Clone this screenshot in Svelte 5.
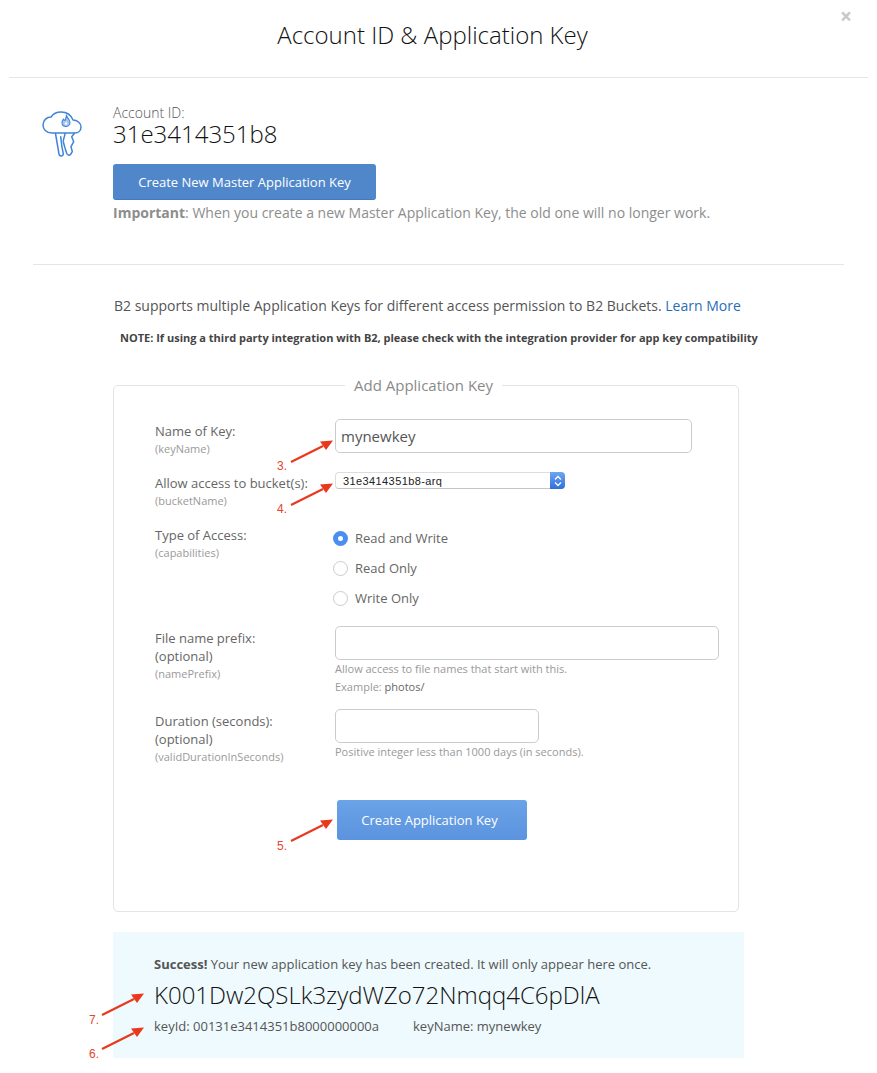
<script lang="ts">
  // steps drawn over the form: tail -> tip, with its number beside the tail
  const arrows = [
    { n: "3.", x: 291, y: 462, lx: 277, ly: 470 },
    { n: "4.", x: 291, y: 505, lx: 277, ly: 513 },
    { n: "5.", x: 291, y: 841, lx: 277, ly: 850 },
    { n: "7.", x: 102, y: 1015, lx: 89, ly: 1024 },
    { n: "6.", x: 102, y: 1049, lx: 89, ly: 1058 }
  ];

  const access = [
    { label: "Read and Write", checked: true },
    { label: "Read Only", checked: false },
    { label: "Write Only", checked: false }
  ];
</script>

<div class="page">
  <header class="head">
    <h1>Account ID &amp; Application Key</h1>
    <span class="close">×</span>
  </header>

  <section class="account">
    <svg class="logo" width="42" height="46" viewBox="0 0 42 46" fill="none" stroke="#3f84d6" stroke-width="1.500" stroke-linejoin="round" stroke-linecap="round">
      <path d="M10 22 C4 22 1 18 1 14 C1 9 5 6 9 6 C11 3 15 1 19 1 C25 1 29 4 31 9 C35 9 39 12 39 16 C39 20 36 22 33 22 Z" />
      <path d="M24.500 4 C24.500 6.500 28 8.500 28 11.500 C28 14 26 15.500 24 15.500 C21.500 15.500 20 14 20 11.500 C20 10 21 9 21.500 8 C22 9 22.500 9.500 23 9.500 C23.500 8 24.500 6 24.500 4 Z" fill="#3f84d6" fill-opacity="0.45" stroke-width="1.100" />
      <path d="M24 10.500 C24.500 11.500 25.500 12 25 13 C24.500 14 23 14 22.800 13 C22.700 12 23.800 11.500 24 10.500 Z" fill="#fff" stroke="none" />
      <path d="M13.500 22.500 L17 43 C17.500 45.500 20.500 46 21.300 43.300 C21 40 20 37 19.700 34 L18.700 25.700" />
      <path d="M23 22.500 C23 25 21 28 21.300 30.700 L23 37 L24.700 42.300 C25.500 44.500 27.500 44.500 28.500 43.500 L30.300 40.700 L29 35.700 L31.700 30.700 L29.700 25.700 L32.300 22.500" />
    </svg>
    <div class="account-body">
      <div class="account-label">Account ID:</div>
      <div class="account-id">31e3414351b8</div>
      <button class="btn master">Create New Master Application Key</button>
      <p class="important"><strong>Important</strong>: When you create a new Master Application Key, the old one will no longer work.</p>
    </div>
  </section>

  <hr class="rule" />

  <p class="intro">B2 supports multiple Application Keys for different access permission to B2 Buckets. <span class="link">Learn More</span></p>
  <p class="note">NOTE: If using a third party integration with B2, please check with the integration provider for app key compatibility</p>

  <fieldset class="form">
    <legend>Add Application Key</legend>

    <div class="row row-name">
      <div class="label">Name of Key:<small>(keyName)</small></div>
      <div class="input big">mynewkey</div>
    </div>

    <div class="row row-bucket">
      <div class="label">Allow access to bucket(s):<small>(bucketName)</small></div>
      <div class="select">
        <span>31e3414351b8-arq</span>
        <span class="stepper">
          <svg width="8" height="12" viewBox="0 0 8 12" fill="none" stroke="#fff" stroke-width="1.300"><path d="M1 4.500 L4 1.500 L7 4.500 M1 7.500 L4 10.500 L7 7.500" /></svg>
        </span>
      </div>
    </div>

    <div class="row row-type">
      <div class="label">Type of Access:<small>(capabilities)</small></div>
      <div class="radios">
        {#each access as opt}
          <div class="radio-row">
            <span class="radio" class:on={opt.checked}></span>
            {opt.label}
          </div>
        {/each}
      </div>
    </div>

    <div class="row row-prefix">
      <div class="label">File name prefix:<br />(optional)<small>(namePrefix)</small></div>
      <div>
        <div class="input wide"></div>
        <div class="hint">Allow access to file names that start with this.</div>
        <div class="hint example">Example: <span>photos/</span></div>
      </div>
    </div>

    <div class="row row-duration">
      <div class="label">Duration (seconds):<br />(optional)<small>(validDurationInSeconds)</small></div>
      <div>
        <div class="input short"></div>
        <div class="hint">Positive integer less than 1000 days (in seconds).</div>
      </div>
    </div>

    <button class="btn create">Create Application Key</button>
  </fieldset>

  <section class="success">
    <p class="success-msg"><strong>Success!</strong> Your new application key has been created. It will only appear here once.</p>
    <div class="app-key">K001Dw2QSLk3zydWZo72Nmqq4C6pDlA</div>
    <div class="key-meta"><span>keyId: 00131e3414351b8000000000a</span><span>keyName: mynewkey</span></div>
  </section>

  <svg class="marks" width="877" height="1073" viewBox="0 0 877 1073">
    {#each arrows as a}
      <g transform="translate({a.x} {a.y})">
        <path d="M0 0 L32 -16" stroke="#e8391f" stroke-width="2.200" fill="none" />
        <path d="M42 -21.500 L29 -20.500 L35 -12 Z" fill="#e8391f" />
      </g>
      <text x={a.lx} y={a.ly}>{a.n}</text>
    {/each}
  </svg>
</div>

<style>
  :global(body) {
    background: #fff;
  }
  .page {
    position: relative;
    width: 877px;
    height: 1073px;
    overflow: hidden;
    font-family: "Open Sans", sans-serif;
    color: #555;
  }
  .head {
    position: relative;
    margin: 0 9px;
    height: 77px;
    padding-right: 12px;
    border-bottom: 1px solid #e5e5e5;
    text-align: center;
  }
  h1 {
    margin: 0;
    padding-top: 18px;
    font-size: 24px;
    line-height: 33px;
    font-weight: 300;
    color: #111;
  }
  .close {
    position: absolute;
    right: 16px;
    top: 3px;
    font-size: 21px;
    line-height: 26px;
    font-weight: 700;
    color: #c8c8c8;
  }
  .account {
    display: flex;
    padding: 25px 0 0 42px;
  }
  .logo {
    flex: none;
    margin: 8px 29px 0 0;
  }
  .account-body {
    display: flex;
    flex-direction: column;
    align-items: flex-start;
  }
  .account-label {
    font-size: 14px;
    line-height: 19px;
    font-weight: 300;
    color: #555;
  }
  .account-id {
    font-size: 24px;
    line-height: 23px;
    font-weight: 300;
    color: #111;
  }
  .btn {
    display: block;
    border: none;
    border-radius: 3px;
    font-family: inherit;
    color: #fff;
    padding: 0;
  }
  .master {
    width: 263px;
    height: 36px;
    margin-top: 19px;
    font-size: 13px;
    background: #5087cb;
    border-bottom: 1px solid #4379bd;
  }
  .important {
    margin: 3px 0 0;
    font-size: 14px;
    line-height: 19px;
    color: #8d8d8d;
  }
  .important strong {
    font-weight: 700;
  }
  .rule {
    margin: 42px 33px 0;
    border: none;
    border-top: 1px solid #e5e5e5;
  }
  .intro {
    margin: 31px 0 0 114px;
    font-size: 14px;
    line-height: 19px;
    color: #555;
  }
  .link {
    color: #2a6db5;
  }
  .note {
    margin: 15px 0 0 120px;
    font-size: 11px;
    line-height: 15px;
    font-weight: 700;
    color: #444;
    white-space: nowrap;
  }
  .form {
    box-sizing: border-box;
    width: 626px;
    height: 537px;
    margin: 30px 0 0 113px;
    padding: 0 0 0 41px;
    border: 1px solid #e4e4e4;
    border-radius: 5px;
    min-width: 0;
  }
  legend {
    margin: 0 0 0 190px;
    padding: 0 9px;
    font-size: 15px;
    line-height: 20px;
    color: #8a8a8a;
  }
  .row {
    display: grid;
    grid-template-columns: 180px 1fr;
  }
  .row-name {
    margin-top: 24px;
  }
  .row-bucket {
    margin-top: 14px;
  }
  .row-type {
    margin-top: 16px;
  }
  .row-prefix {
    margin-top: 13px;
  }
  .row-duration {
    margin-top: 13px;
  }
  .label {
    padding-top: 3px;
    font-size: 13px;
    line-height: 18px;
    color: #666;
  }
  .label small {
    display: block;
    font-size: 11px;
    line-height: 18px;
    color: #9a9a9a;
  }
  .row-bucket .label {
    padding-top: 2px;
  }
  .row-type .label {
    padding-top: 0;
  }
  .input {
    box-sizing: border-box;
    height: 34px;
    border: 1px solid #ccc;
    border-radius: 5px;
    background: #fff;
  }
  .big {
    width: 357px;
    padding-left: 5px;
    font-size: 15px;
    line-height: 32px;
    color: #555;
  }
  .wide {
    width: 384px;
  }
  .short {
    width: 204px;
  }
  .select {
    box-sizing: border-box;
    position: relative;
    display: flex;
    align-items: center;
    width: 230px;
    height: 17px;
    padding-left: 7px;
    border: 1px solid #ddd;
    border-bottom-color: #c4c4c4;
    border-radius: 4px;
    font-family: "Liberation Sans", sans-serif;
    font-size: 11px;
    letter-spacing: 0.4px;
    color: #222;
  }
  .stepper {
    position: absolute;
    right: -1px;
    top: -1px;
    width: 15px;
    height: 17px;
    display: flex;
    align-items: center;
    justify-content: center;
    border-radius: 0 4px 4px 0;
    background: linear-gradient(#6fa5f3, #2f70dc);
  }
  .radios {
    display: flex;
    flex-direction: column;
    margin-top: -3px;
    margin-left: -2px;
  }
  .radio-row {
    display: flex;
    align-items: center;
    gap: 7px;
    height: 30px;
    font-size: 13px;
    color: #666;
  }
  .radio {
    box-sizing: border-box;
    width: 15px;
    height: 15px;
    border: 1px solid #ccc;
    border-radius: 50%;
    background: #fff;
  }
  .radio.on {
    border: 5px solid #4a8ff0;
  }
  .hint {
    font-size: 11px;
    line-height: 19px;
    color: #999;
  }
  .input + .hint {
    margin-top: -1px;
  }
  .example {
    margin-top: -1px;
  }
  .example span {
    color: #666;
  }
  .create {
    width: 190px;
    height: 40px;
    margin: 34px 0 0 182px;
    padding-right: 5px;
    font-size: 13px;
    background: linear-gradient(#6ba3e8, #5b93de);
  }
  .success {
    box-sizing: border-box;
    width: 631px;
    height: 126px;
    margin: 20px 0 0 113px;
    padding: 23px 0 0 41px;
    background: #eefafd;
  }
  .success-msg {
    margin: 0;
    font-size: 13px;
    line-height: 18px;
    color: #555;
  }
  .app-key {
    margin-top: 5px;
    font-size: 24px;
    line-height: 33px;
    font-weight: 300;
    color: #111;
  }
  .key-meta {
    display: flex;
    gap: 34px;
    margin-top: 6px;
    font-size: 13px;
    line-height: 18px;
    color: #555;
  }
  .marks {
    position: absolute;
    left: 0;
    top: 0;
    pointer-events: none;
  }
  .marks text {
    font-family: "Liberation Sans", sans-serif;
    font-size: 12px;
    fill: #e8442a;
  }
</style>
